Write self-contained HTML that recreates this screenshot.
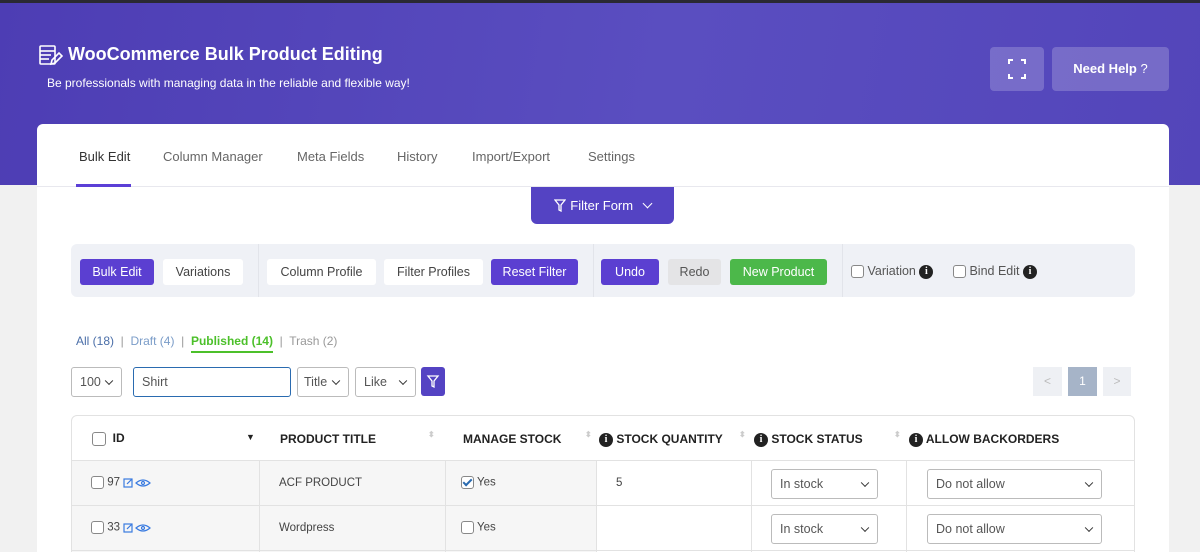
<!DOCTYPE html>
<html style="width:1200px;height:552px;overflow:hidden"><head><meta charset="utf-8"><style>
*{box-sizing:border-box;margin:0;padding:0}
body{width:1200px;height:552px;overflow:hidden;background:#f1f1f1;font-family:"Liberation Sans",sans-serif;position:relative}
.abs{position:absolute}
.top{left:0;top:0;width:1200px;height:3px;background:#2a2933}
.hdr{left:0;top:3px;width:1200px;height:182px;background:linear-gradient(100deg,#4d3db4 0%,#5a4ec0 55%,#5345ba 100%)}
.title{left:68px;top:44px;color:#fff;font-weight:bold;font-size:18px}
.sub{left:47px;top:76px;color:#fff;font-size:12px}
.hb{background:rgba(255,255,255,0.2);border-radius:4px;color:#fff}
.card{left:37px;top:124px;width:1132px;height:440px;background:#fff;border-radius:6px}
.tab{top:149px;font-size:13px;color:#666}
.btn{position:absolute;top:259px;height:26px;border-radius:3px;font-size:12.5px;text-align:center;line-height:26px}
.p{background:#5b3fd1;color:#fff}
.w{background:#fff;color:#444}
.sel{position:absolute;border:1px solid #bbb;border-radius:3px;background:#fff;font-size:12.5px;color:#555;padding-left:8px;line-height:28px}
.chev{position:absolute;right:9px;top:50%;width:6px;height:6px;border-right:1.5px solid #333;border-bottom:1.5px solid #333;transform:translateY(-70%) rotate(45deg)}
.cb{display:inline-block;width:13px;height:13px;border:1px solid #888;border-radius:3px;background:#fff;vertical-align:middle}
.info{display:inline-block;width:14px;height:14px;border-radius:50%;background:#222;color:#fff;font-size:10px;font-weight:bold;text-align:center;line-height:14px;vertical-align:middle;font-family:"Liberation Serif",serif}
.th{position:absolute;top:432px;font-size:12px;font-weight:bold;color:#222}
.td{position:absolute;font-size:11.5px;color:#444}
</style></head><body>
<div class="abs top"></div>
<div class="abs hdr"></div>
<svg class="abs" style="left:39px;top:45px" width="24" height="22" viewBox="0 0 24 22" fill="none" stroke="#fff" stroke-width="1.6"><rect x="1" y="1" width="15" height="18" rx="1"/><line x1="1" y1="6" x2="16" y2="6"/><line x1="1" y1="10" x2="12" y2="10"/><line x1="1" y1="14" x2="10" y2="14"/><path d="M12 19l1-4 7-7 3 3-7 7z"/></svg>
<div class="abs title">WooCommerce Bulk Product Editing</div>
<div class="abs sub">Be professionals with managing data in the reliable and flexible way!</div>
<div class="abs hb" style="left:990px;top:47px;width:54px;height:44px"><svg width="54" height="44" viewBox="0 0 54 44" fill="none" stroke="#fff" stroke-width="2"><path d="M19 17v-4h4M31 13h4v4M35 27v4h-4M23 31h-4v-4"/></svg></div>
<div class="abs hb" style="left:1052px;top:47px;width:117px;height:44px;font-weight:bold;font-size:13px;line-height:44px;text-align:center">Need Help <span style="font-weight:normal">?</span></div>
<div class="abs card"></div>
<div class="abs tab" style="left:79px;color:#333">Bulk Edit</div>
<div class="abs tab" style="left:163px">Column Manager</div>
<div class="abs tab" style="left:297px">Meta Fields</div>
<div class="abs tab" style="left:397px">History</div>
<div class="abs tab" style="left:472px">Import/Export</div>
<div class="abs tab" style="left:588px">Settings</div>
<div class="abs" style="left:37px;top:186px;width:1132px;height:1px;background:#e8e8ee"></div>
<div class="abs" style="left:76px;top:184px;width:55px;height:3px;background:#5b3fd6"></div>
<div class="abs" style="left:531px;top:187px;width:143px;height:37px;background:#5443c3;border-radius:0 0 6px 6px;color:#fff;font-size:13px;line-height:37px;text-align:center">
<svg width="12" height="13" viewBox="0 0 12 13" fill="none" stroke="#fff" stroke-width="1.3" style="vertical-align:-2px;margin-right:4px"><path d="M1 1h10L7 6v6L5 11V6z"/></svg>Filter Form <span style="display:inline-block;width:7px;height:7px;border-right:1.3px solid #fff;border-bottom:1.3px solid #fff;transform:rotate(45deg);margin:0 0 3px 7px"></span></div>
<div class="abs" style="left:71px;top:244px;width:1064px;height:53px;background:#eff1f6;border-radius:6px"></div>
<div class="abs" style="left:258px;top:244px;width:1px;height:53px;background:#e2e4ea"></div>
<div class="abs" style="left:593px;top:244px;width:1px;height:53px;background:#e2e4ea"></div>
<div class="abs" style="left:842px;top:244px;width:1px;height:53px;background:#e2e4ea"></div>
<div class="btn p" style="left:80px;width:74px">Bulk Edit</div>
<div class="btn w" style="left:163px;width:80px">Variations</div>
<div class="btn w" style="left:267px;width:109px">Column Profile</div>
<div class="btn w" style="left:384px;width:99px">Filter Profiles</div>
<div class="btn p" style="left:491px;width:87px">Reset Filter</div>
<div class="btn p" style="left:601px;width:58px">Undo</div>
<div class="btn" style="left:668px;width:53px;background:#e4e4e6;color:#555">Redo</div>
<div class="btn" style="left:730px;width:97px;background:#4cb84a;color:#fff">New Product</div>
<div class="abs" style="left:851px;top:264px;font-size:12.5px;color:#555"><span class="cb"></span> Variation <span class="info">i</span></div>
<div class="abs" style="left:953px;top:264px;font-size:12.5px;color:#555"><span class="cb"></span> Bind Edit <span class="info">i</span></div>
<div class="abs" style="left:76px;top:334px;font-size:12px;color:#999"><span style="color:#4a6ea8">All (18)</span> &nbsp;|&nbsp; <span style="color:#7a9cc8">Draft (4)</span> &nbsp;|&nbsp; <span style="color:#4cc02a;font-weight:bold;border-bottom:2px solid #4cc02a;padding-bottom:3px">Published (14)</span> &nbsp;|&nbsp; Trash (2)</div>
<div class="sel" style="left:71px;top:367px;width:51px;height:30px">100<span class="chev"></span></div>
<div class="sel" style="left:133px;top:367px;width:158px;height:30px;border:1.5px solid #2a6bb0">Shirt</div>
<div class="sel" style="left:297px;top:367px;width:52px;height:30px;padding-left:6px">Title<span class="chev"></span></div>
<div class="sel" style="left:355px;top:367px;width:61px;height:30px">Like<span class="chev"></span></div>
<div class="abs" style="left:421px;top:367px;width:24px;height:29px;background:#5443c3;border-radius:3px"><svg width="24" height="29" viewBox="0 0 24 29" fill="none" stroke="#fff" stroke-width="1.3"><path d="M7 9h10l-4 5v6l-2-1v-5z"/></svg></div>
<div class="abs" style="left:1033px;top:367px;width:29px;height:29px;background:#eef0f4;color:#bbb;font-size:12px;text-align:center;line-height:29px">&lt;</div>
<div class="abs" style="left:1068px;top:367px;width:29px;height:29px;background:#a6b4c8;color:#fff;font-size:12px;text-align:center;line-height:29px">1</div>
<div class="abs" style="left:1103px;top:367px;width:28px;height:29px;background:#eef0f4;color:#bbb;font-size:12px;text-align:center;line-height:29px">&gt;</div>
<div class="abs" style="left:71px;top:415px;width:1064px;height:150px;border:1px solid #e2e2e2;border-radius:6px;background:#fff"></div>
<div class="abs" style="left:72px;top:461px;width:524px;height:91px;background:#f6f6f6"></div>
<div class="abs" style="left:72px;top:460px;width:1062px;height:1px;background:#e2e2e2"></div>
<div class="abs" style="left:72px;top:505px;width:1062px;height:1px;background:#e2e2e2"></div>
<div class="abs" style="left:72px;top:550px;width:1062px;height:1px;background:#e2e2e2"></div>
<div class="abs" style="left:259px;top:461px;width:1px;height:91px;background:#e2e2e2"></div>
<div class="abs" style="left:445px;top:461px;width:1px;height:91px;background:#e2e2e2"></div>
<div class="abs" style="left:596px;top:461px;width:1px;height:91px;background:#e2e2e2"></div>
<div class="abs" style="left:751px;top:461px;width:1px;height:91px;background:#e2e2e2"></div>
<div class="abs" style="left:906px;top:461px;width:1px;height:91px;background:#e2e2e2"></div>
<div class="th" style="left:92px;top:431px"><span class="cb" style="width:14px;height:14px"></span> &nbsp;ID</div>
<div class="th" style="left:246px;font-size:9px">▼</div>
<div class="th" style="left:280px">PRODUCT TITLE</div>
<div class="th" style="left:428px;color:#ccc;font-size:8px;top:430px">⬍</div>
<div class="th" style="left:463px">MANAGE STOCK</div>
<div class="th" style="left:585px;color:#ccc;font-size:8px;top:430px">⬍</div>
<div class="th" style="left:599px"><span class="info">i</span> STOCK QUANTITY</div>
<div class="th" style="left:739px;color:#ccc;font-size:8px;top:430px">⬍</div>
<div class="th" style="left:754px"><span class="info">i</span> STOCK STATUS</div>
<div class="th" style="left:894px;color:#ccc;font-size:8px;top:430px">⬍</div>
<div class="th" style="left:909px"><span class="info">i</span> ALLOW BACKORDERS</div>
<div class="td" style="left:91px;top:476px"><span class="cb"></span> 97 <svg width="30" height="10" viewBox="0 0 30 10" fill="none" stroke="#3a7be0" stroke-width="1.2" style="vertical-align:middle"><rect x="1" y="1" width="8" height="8"/><path d="M4 6l5-5"/><path d="M13 5q7-6 14 0q-7 6-14 0z"/><circle cx="20" cy="5" r="1.5"/></svg></div>
<div class="td" style="left:279px;top:477px">ACF PRODUCT</div>
<div class="td" style="left:461px;top:476px"><span class="cb" style="position:relative"><span style="position:absolute;left:3px;top:0;width:5px;height:9px;border-right:2px solid #2a6bb0;border-bottom:2px solid #2a6bb0;transform:rotate(45deg)"></span></span> Yes</div>
<div class="td" style="left:616px;top:477px">5</div>
<div class="sel" style="left:771px;top:469px;width:107px;height:30px">In stock<span class="chev"></span></div>
<div class="sel" style="left:927px;top:469px;width:175px;height:30px">Do not allow<span class="chev"></span></div>
<div class="td" style="left:91px;top:521px"><span class="cb"></span> 33 <svg width="30" height="10" viewBox="0 0 30 10" fill="none" stroke="#3a7be0" stroke-width="1.2" style="vertical-align:middle"><rect x="1" y="1" width="8" height="8"/><path d="M4 6l5-5"/><path d="M13 5q7-6 14 0q-7 6-14 0z"/><circle cx="20" cy="5" r="1.5"/></svg></div>
<div class="td" style="left:279px;top:522px">Wordpress</div>
<div class="td" style="left:461px;top:521px"><span class="cb"></span> Yes</div>
<div class="sel" style="left:771px;top:514px;width:107px;height:30px">In stock<span class="chev"></span></div>
<div class="sel" style="left:927px;top:514px;width:175px;height:30px">Do not allow<span class="chev"></span></div>
</body></html>
